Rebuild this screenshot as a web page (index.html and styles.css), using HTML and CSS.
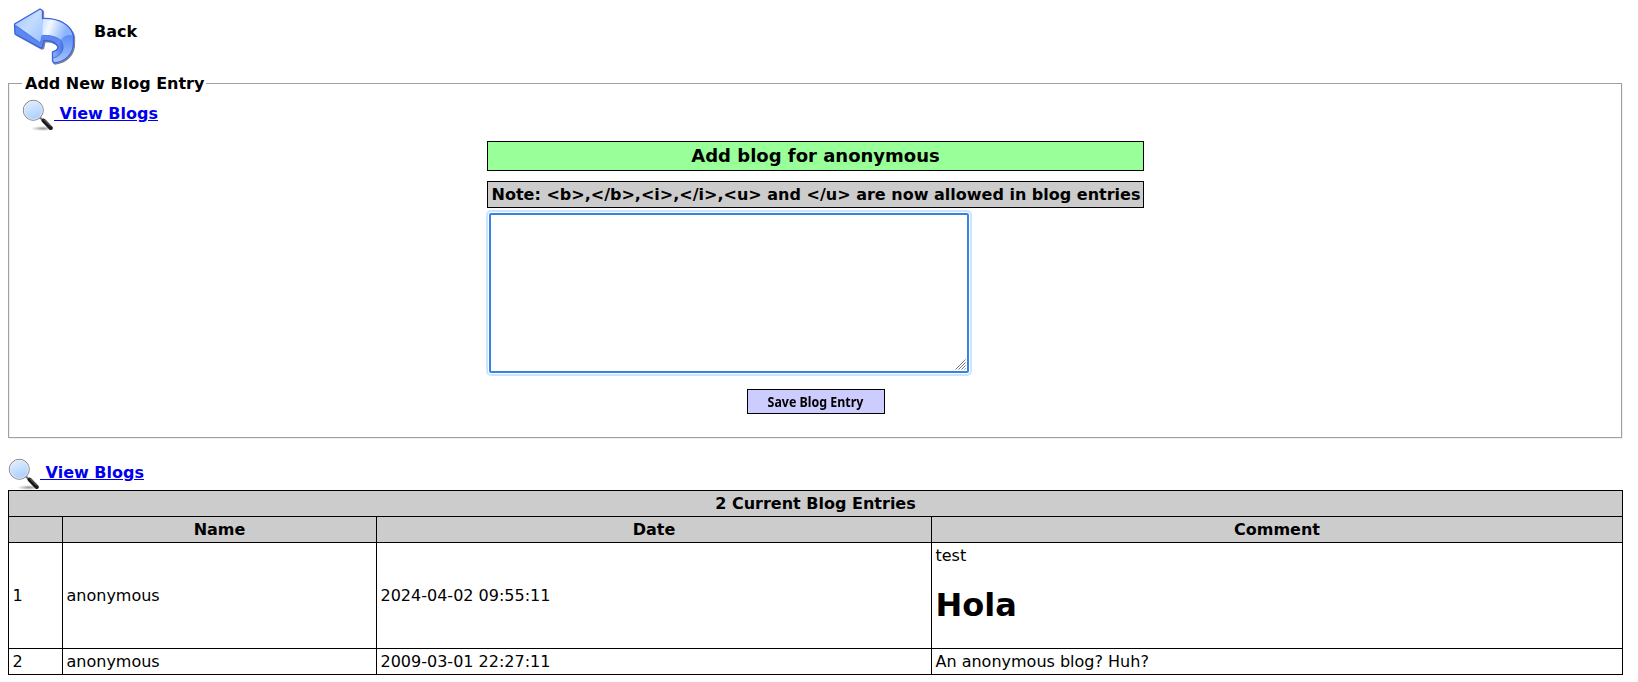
FILE: index.html
```html
<!DOCTYPE html>
<html lang="en">
<head>
<meta charset="utf-8">
<title>Add New Blog Entry</title>
<link rel="stylesheet" href="styles.css">
</head>
<body>
<svg class="defs" width="0" height="0" aria-hidden="true">
  <defs>
    <linearGradient id="lens" x1=".3" y1="0" x2=".7" y2="1"><stop offset="0" stop-color="#e0eeff"/><stop offset=".45" stop-color="#c8e0ff"/><stop offset="1" stop-color="#a6ccff"/></linearGradient>
    <radialGradient id="floor"><stop offset="0" stop-color="#000" stop-opacity=".4"/><stop offset="1" stop-color="#000" stop-opacity="0"/></radialGradient>
    <symbol id="magnifier" viewBox="0 0 32 32">
      <ellipse cx="21" cy="29.500" rx="12" ry="2.500" fill="url(#floor)"/>
      <path d="M17.500 18l4 4" stroke="#777" stroke-width="2"/>
      <path d="M21.500 21.500l7.300 7.500" stroke="#181818" stroke-width="4" stroke-linecap="round"/>
      <path d="M22 20.500l7 7" stroke="#999" stroke-width=".8"/>
      <circle cx="11.300" cy="11.300" r="10" fill="url(#lens)" stroke="#7d7d7d" stroke-width="1"/>
      <circle cx="11.300" cy="11.300" r="9.100" fill="none" stroke="#eee" stroke-width=".8"/>
    </symbol>
  </defs>
</svg>

<a class="back">
  <svg class="back-icon" viewBox="0 0 80 70" aria-hidden="true">
    <defs>
      <linearGradient id="head" x1="0" y1="0" x2="1" y2="1"><stop offset="0" stop-color="#9cc0ff"/><stop offset=".5" stop-color="#c4dcff"/><stop offset="1" stop-color="#9cc2ff"/></linearGradient>
      <linearGradient id="band" x1="37" y1="0" x2="68" y2="12" gradientUnits="userSpaceOnUse"><stop offset="0" stop-color="#abcdff"/><stop offset=".5" stop-color="#f2f8ff"/><stop offset="1" stop-color="#8db5ff"/></linearGradient>
      <linearGradient id="inner" x1="0" y1="0" x2="1" y2="0"><stop offset="0" stop-color="#92b6fa"/><stop offset="1" stop-color="#3f6ce0"/></linearGradient>
      <linearGradient id="tail" x1="0" y1="0" x2="0" y2="1"><stop offset="0" stop-color="#5d8cf2"/><stop offset="1" stop-color="#a5c6ff"/></linearGradient>
      <filter id="shade" x="-10%" y="-10%" width="125%" height="125%"><feDropShadow dx="1" dy="1" stdDeviation=".7" flood-color="#000" flood-opacity=".5"/></filter>
    </defs>
    <g filter="url(#shade)" stroke-linejoin="round">
      <path d="M9.500 24L35 9l2.500 1.500v8C55 18 66 25 68.500 36v6C69 54 60 62 49 63l-1.500-2v-9C53 50.500 54.500 47 51 44 48 41.500 44 40.500 39 40.500l-1.500 7-2 .5L10 34z" fill="#5b88f0"/>
      <path d="M48 51.500C53 50 55 46 51.500 43l4-3C61 44 60 54 47.500 58z" fill="url(#inner)"/>
      <path d="M37.500 18.500C55 18 66 25 68.500 36 63 34 59 36 56 40.500 51 36 44 35 36.500 35.500z" fill="url(#band)"/>
      <path d="M9.500 24L35 9l2.500 1.500v8V36l-2 7z" fill="url(#head)"/>
      <path d="M56 40.500C59 36 63 34 68.500 36v6C69 54 60 62 49 63l-1.500-2v-3C57 56 61 48 56 40.500z" fill="url(#tail)"/>
      <path d="M11 26l24.500 17 1.500-7.500c8-.5 14 1 19 5C61 48 57 56 48 58" fill="none" stroke="#4d79ea"/>
      <path d="M9.500 24L35 9l2.500 1.500v8C55 18 66 25 68.500 36v6C69 54 60 62 49 63l-1.500-2v-9C53 50.500 54.500 47 51 44 48 41.500 44 40.500 39 40.500l-1.500 7-2 .5L10 34z" fill="none" stroke="#3d60dc" stroke-width="1.300"/>
    </g>
  </svg>
  <span class="back-label">Back</span>
</a>

<fieldset class="entry">
  <legend>Add New Blog Entry</legend>
  <a class="view" href="#"><svg class="glass"><use href="#magnifier"/></svg><span class="view-label">&nbsp;View Blogs</span></a>
  <form class="form">
    <div class="form-header">Add blog for anonymous</div>
    <div class="form-note">Note: &lt;b&gt;,&lt;/b&gt;,&lt;i&gt;,&lt;/i&gt;,&lt;u&gt; and &lt;/u&gt; are now allowed in blog entries</div>
    <div class="editor">
      <textarea class="editor-input" aria-label="Blog entry"></textarea>
      <svg class="grip" viewBox="0 0 11 11" aria-hidden="true"><path d="M.5 10.500l10-10M3.500 10.500l7-7M6.500 10.500l4-4M9.500 10.500l1-1" stroke="#777" stroke-width="1"/></svg>
    </div>
    <button class="save" type="button"><span class="save-label">Save Blog Entry</span></button>
  </form>
</fieldset>

<a class="view view-second" href="#"><svg class="glass"><use href="#magnifier"/></svg><span class="view-label">&nbsp;View Blogs</span></a>
<table class="entries">
  <colgroup><col class="c-num"><col class="c-name"><col class="c-date"><col></colgroup>
  <tr class="head"><th colspan="4">2 Current Blog Entries</th></tr>
  <tr class="head"><th></th><th>Name</th><th>Date</th><th>Comment</th></tr>
  <tr class="tall"><td>1</td><td>anonymous</td><td>2024-04-02 09:55:11</td><td>test<h1>Hola</h1></td></tr>
  <tr><td>2</td><td>anonymous</td><td>2009-03-01 22:27:11</td><td>An anonymous blog? Huh?</td></tr>
</table>
</body>
</html>
```
FILE: styles.css
```css
* { box-sizing: border-box; }
html { overflow: hidden; }
body {
  margin: 0 15px 0 8px;
  background: #fff;
  color: #000;
  font: 16px/19px "DejaVu Sans", sans-serif;
}
.defs { position: absolute; }
.back { display: flex; height: 74px; font-weight: bold; }
.back-icon { width: 80px; height: 70px; margin-left: -3px; }
.back-label { margin: 22px 0 0 9px; }
.entry {
  margin: 0 1px 0 0;
  padding: 6px 13px 0;
  height: 364px;
  border: 1px solid #a0a0a0;
  box-shadow: inset 1px 0 #f0f0f0, 1px 1px #f0f0f0;
}
legend { padding: 0 2px 0 3px; font-weight: bold; }
.view { display: flex; height: 32px; font-weight: bold; color: #00e; }
.glass { width: 32px; height: 32px; }
.view-label { margin-top: 5px; }
.view-second { margin-top: 20px; }
.form { width: 657px; margin: 10px 0 0 465px; display: flex; flex-direction: column; }
.form-header {
  height: 30px;
  border: 1px solid #000;
  background: #9f9;
  font-size: 18px;
  line-height: 28px;
  font-weight: bold;
  text-align: center;
}
.form-note {
  height: 27px;
  margin-top: 10px;
  padding-left: 1px;
  border: 1px solid #000;
  background: #ccc;
  line-height: 25px;
  font-weight: bold;
  text-align: center;
  white-space: nowrap;
}
.editor { position: relative; width: 480px; height: 160px; margin: 5px 0 0 2px; }
.editor-input {
  display: block;
  width: 100%;
  height: 100%;
  resize: none;
  outline: none;
  border: 2px solid #3584e4;
  border-radius: 2px;
  background: #fff;
  box-shadow: 0 0 0 1px #fff, 0 0 0 3px #cce5ff;
}
.grip { position: absolute; right: 3px; bottom: 3px; width: 11px; height: 11px; }
.save {
  align-self: center;
  width: 138px;
  height: 25px;
  margin-top: 16px;
  padding: 2px 0 0;
  border: 1px solid #000;
  background: #ccf;
  color: #000;
  font: bold 13.333px/21px "Noto Sans", sans-serif;
}
.save-label { display: inline-block; transform: scaleX(.93); }
.entries { width: 1615px; table-layout: fixed; border-collapse: collapse; }
.c-num { width: 54px; }
.c-name { width: 314px; }
.c-date { width: 555px; }
.entries tr { height: 26px; }
.entries .tall { height: 106px; }
.head { background: #ccc; }
.entries th, .entries td { border: 1px solid #000; padding: 3px; }
.entries td { padding-left: 3.5px; text-align: left; }
.entries h1 { margin: 21px 0; font-size: 32px; line-height: 38px; }
```
